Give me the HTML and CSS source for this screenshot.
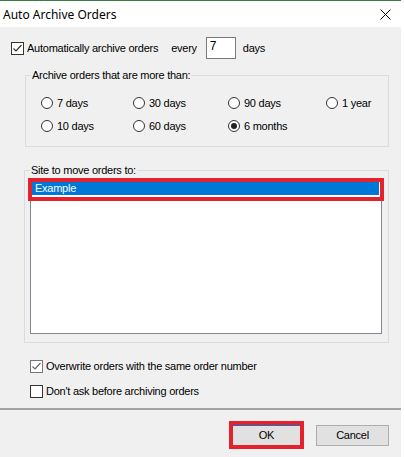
FILE: index.html
```html
<!DOCTYPE html>
<html lang="en">
<head>
    <meta charset="UTF-8">
    <meta name="viewport" content="width=device-width, initial-scale=1.0">
    <title>Auto Archive Orders</title>
    <link rel="stylesheet" href="styles.css">
</head>
<body>

    <div class="window">
        <!-- Title bar -->
        <div class="titlebar">
            <span class="title">Auto Archive Orders</span>
            <svg class="close" width="11" height="11" viewBox="0 0 11 11">
                <path d="M0.5 0.5L10.5 10.5M10.5 0.5L0.5 10.5" stroke="#000" stroke-width="1" fill="none"/>
            </svg>
        </div>

        <div class="content">
            <div class="auto-row">
                <span class="check">
                    <svg width="11" height="11" viewBox="0 0 11 11"><path d="M1.5 5.5L4 8L9.5 2" stroke="#333" stroke-width="1.2" fill="none"/></svg>
                </span>
                <span class="auto-label">Automatically archive orders</span>
                <span class="every">every</span>
                <span class="textbox">7</span>
                <span class="unit">days</span>
            </div>

            <fieldset class="group group-age">
                <legend>Archive orders that are more than:</legend>
                <div class="radio-grid">
                    <label class="option"><span class="radio"></span>7 days</label>
                    <label class="option"><span class="radio"></span>30 days</label>
                    <label class="option"><span class="radio"></span>90 days</label>
                    <label class="option"><span class="radio"></span>1 year</label>
                    <label class="option"><span class="radio"></span>10 days</label>
                    <label class="option"><span class="radio"></span>60 days</label>
                    <label class="option"><span class="radio selected"></span>6 months</label>
                </div>
            </fieldset>

            <fieldset class="group group-site">
                <legend>Site to move orders to:</legend>
                <div class="listbox">
                    <div class="mark mark-item">
                        <div class="list-item">Example</div>
                    </div>
                </div>
            </fieldset>

            <div class="options">
                <label class="option">
                    <span class="check check-soft">
                        <svg width="11" height="11" viewBox="0 0 11 11"><path d="M1.5 5.5L4 8L9.5 2" stroke="#666" stroke-width="1.2" fill="none"/></svg>
                    </span>
                    Overwrite orders with the same order number
                </label>
                <label class="option">
                    <span class="check"></span>
                    Don't ask before archiving orders
                </label>
            </div>
        </div>

        <!-- Buttons -->
        <div class="footer">
            <span class="mark mark-btn"><button class="btn btn-ok">OK</button></span>
            <button class="btn btn-cancel">Cancel</button>
        </div>
    </div>

</body>
</html>
```

FILE: styles.css
```css
/* Reset */
* {
    margin: 0;
    padding: 0;
    box-sizing: border-box;
}

body {
    background: #fff;
    font-family: "Liberation Sans", Arial, sans-serif;
    font-size: 11px;
    letter-spacing: -0.25px;
    line-height: 13px;
    color: #000;
}

.window {
    width: 401px;
    height: 457px;
    background: #f0f0f0;
    display: flex;
    flex-direction: column;
}

/* Title bar */
.titlebar {
    height: 27px;
    flex: none;
    background: #fff;
    border-top: 1px solid #3b7d45;
    display: flex;
    align-items: center;
    justify-content: space-between;
    padding: 0 10px 0 3px;
}

.title {
    font-family: "Noto Sans", sans-serif;
    font-size: 12px;
    letter-spacing: 0;
}

.close {
    display: block;
}

.content {
    flex: 1;
}

/* Top row */
.auto-row {
    display: flex;
    align-items: center;
    height: 22px;
    margin-top: 10px;
    padding-left: 11px;
}

.check {
    width: 13px;
    height: 13px;
    flex: none;
    border: 1px solid #333;
    background: #fff;
    display: flex;
    align-items: center;
    justify-content: center;
}

.check-soft {
    border-color: #777;
}

.auto-label {
    margin-left: 3px;
}

.every {
    margin-left: 13px;
}

.textbox {
    width: 30px;
    height: 22px;
    margin-left: 9px;
    padding: 2px 3px 0;
    border: 1px solid #7a7a7a;
    background: #fff;
    font-size: 12px;
}

.unit {
    margin-left: 7px;
}

/* Group boxes */
.group {
    border: 1px solid #dcdcdc;
    min-width: 0;
}

.group legend {
    margin-left: 5px;
    padding: 0 1px;
    line-height: 14px;
}

.group-age {
    width: 364px;
    margin: 9px 0 0 25px;
}

.radio-grid {
    display: grid;
    grid-template-columns: 92px 95px 98px 1fr;
    grid-auto-rows: 22px;
    row-gap: 1px;
    padding: 10px 0 9px 15px;
}

.option {
    display: flex;
    align-items: center;
    gap: 4px;
}

.radio {
    width: 12px;
    height: 12px;
    flex: none;
    border: 1px solid #333;
    border-radius: 50%;
    background: #fff;
    display: flex;
    align-items: center;
    justify-content: center;
}

.radio.selected::after {
    content: "";
    width: 6px;
    height: 6px;
    border-radius: 50%;
    background: #222;
}

.group-site {
    width: 365px;
    margin: 16px 0 0 24px;
}

.listbox {
    height: 154px;
    margin: 3px 6px 8px 5px;
    border: 1px solid #828790;
    background: #fff;
}

/* Red highlight boxes */
.mark {
    border: 4px solid #e3222b;
}

.mark-item {
    margin: -3px -3px 0 -3px;
}

.list-item {
    height: 15px;
    margin-right: 1px;
    padding-left: 3px;
    background: #0078d7;
    border-bottom: 2px solid #fff;
    color: #fff;
}

/* Bottom checkboxes */
.options {
    display: flex;
    flex-direction: column;
    gap: 5px;
    margin-top: 13px;
    padding-left: 30px;
}

.options .option {
    height: 20px;
    gap: 3px;
}

/* Footer */
.footer {
    height: 49px;
    flex: none;
    border-top: 2px solid #a3a3a3;
    display: flex;
    justify-content: flex-end;
    align-items: flex-start;
    gap: 12px;
    padding-right: 12px;
}

.btn {
    font: inherit;
    letter-spacing: inherit;
    color: #000;
    background: #e1e1e1;
    border: 1px solid #adadad;
    cursor: pointer;
}

.mark-btn {
    display: block;
    width: 75px;
    height: 28px;
    margin-top: 11px;
}

.btn-ok {
    display: block;
    width: 100%;
    height: 100%;
    border: none;
    border-top: 1px solid #0078d7;
}

.btn-cancel {
    width: 73px;
    height: 21px;
    margin-top: 15px;
}
```
